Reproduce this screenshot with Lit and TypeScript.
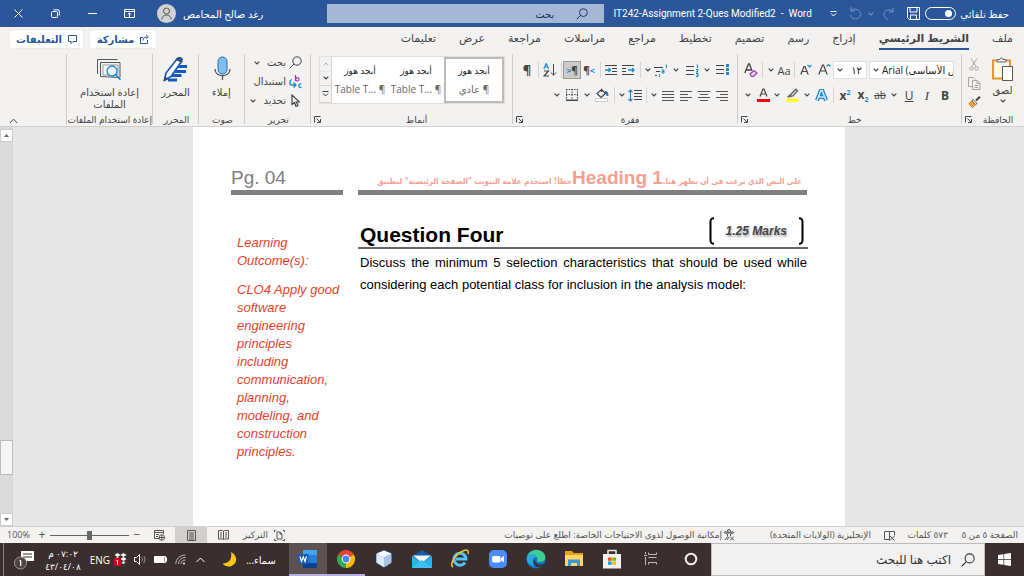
import { LitElement, html, css, svg, nothing } from "lit";
import { customElement, state } from "lit/decorators.js";

const chev = html`<svg class="chev" width="6" height="4" viewBox="0 0 6 4"><path d="M.7.6 3 3 5.3.6" fill="none" stroke="currentColor" stroke-width="1.2"/></svg>`;
const chevBtn = (label: string) => html`<button class="ic" aria-label=${label}>${chev}</button>`;
const sep = html`<i class="sep"></i>`;
const ic = (w: number, h: number, body: unknown) =>
  html`<svg width=${w} height=${h} viewBox="0 0 ${w} ${h}" fill="none" stroke="currentColor" aria-hidden="true">${body}</svg>`;
const tool = (label: string, body: unknown, cls = "") =>
  html`<button class="ic ${cls}" aria-label=${label}>${body}</button>`;

const launcher = html`<button class="launch" aria-label="المزيد">${ic(7, 7, svg`<path d="M.5 6.500V.5H6.500M2.500 2.500 6 6M6.500 3v3.500H3"/>`)}</button>`;
const lines = (rows: number[][], w = 13) =>
  ic(w, 11, rows.map(([a, b], i) => svg`<path d="M${a} ${1.5 + i * 3}H${b}" stroke="#555"/>`));

const tabs = ["ملف", "الشريط الرئيسي", "إدراج", "رسم", "تصميم", "تخطيط", "مراجع", "مراسلات", "مراجعة", "عرض", "تعليمات"];

const bullets = ic(13, 12, svg`<path d="M0 1.500H8M0 5.500H8M0 9.500H8"/><path d="M10 0h3v3h-3zM10 4h3v3h-3zM10 8h3v3h-3z" fill="#1e88d2" stroke="none"/>`);
const numbering = ic(13, 13, svg`<path d="M0 2.500H8M0 6.500H8M0 10.500H8"/><path d="M10.500 1h1v3M10 5.500h2v1.200l-2 1.300h2.200M10 9.500h2v3h-2M10.500 11h1.500" stroke="#1e88d2"/>`);
const multilevel = ic(14, 13, svg`<path d="M0 3.500H9M2 7.500H6M1 11.500H3"/><path d="M11.500 1h1v3M7.500 6h2.500v3H8V7.500h2M5.500 10v3" stroke="#1e88d2"/>`);
const indent = ic(13, 11, svg`<path d="M0 .5H12M7 3.500H12M7 6.500H12M0 9.500H12"/><path d="M0 5H5.500M3.500 3l2 2-2 2" stroke="#1e88d2" stroke-width="1.300"/>`);
const outdent = ic(13, 11, svg`<path d="M0 .5H12M0 3.500H4M0 6.500H4M0 9.500H12"/><path d="M6 5h6M10 3l2 2-2 2" stroke="#1e88d2" stroke-width="1.300"/>`);
const spacing = ic(14, 13, svg`<path d="M6 1.500H14M6 4.500H14M6 7.500H14M6 10.500H14"/><path d="M2.500 1v11M.5 3l2-2 2 2M.5 10l2 2 2-2" stroke="#1e88d2" stroke-width="1.200"/>`);
const fill = ic(14, 14, svg`<path d="M6.500 1.500 10.500 5.500 6 9.500 2 5.500 6.500 1.500V4" stroke-width="1.200"/><path d="M10 4c2 0 2.500 2 2.500 4" stroke="#1e6fb8" stroke-width="2"/><path d="M.5 10.500h12v3H.5z" fill="#fff" stroke="#ccc"/>`);
const borders = ic(12, 12, svg`<path d="M.5 0v11M11.500 0v11M6 0v11M0 .5H12M0 5.500H12" stroke-dasharray="1.500 1.200"/><path d="M0 11.300H12" stroke-width="1.400"/>`);
const sortIcon = ic(14, 14, svg`<path d="M.8 6 3.200.5 5.600 6M1.800 4h3" stroke="#1e88d2" stroke-width="1.200"/><path d="M1 8h4.500L1 13h5" stroke-width="1.200"/><path d="M10.500 1v11M7.800 9.500l2.700 2.700 2.700-2.700"/>`);
const eraser = ic(14, 14, svg`<path d="M.8 10 4.500 1h1L8 8M2.300 7h4.500" stroke-width="1.300"/><path d="m6 11 4-3.500 3 2.500-3.500 3.500h-2z" fill="#ecd5f3" stroke="#a33bb5" stroke-width="1.300"/>`);
const marker = ic(13, 14, svg`<path d="M5 6 10 1.200l1.500 1.500L7 8 4 8.500z" fill="#ddd" stroke="#666" stroke-width="1.300"/><path d="M1.500 9 4 6.500 5.500 8.500z" fill="#666" stroke="#666"/><path d="M.5 10.800h12v3H.5z" fill="#ff0" stroke="none"/>`);
const fontColor = ic(13, 14, svg`<path d="M3 8.500 6 1h1l3 7.500M4 6h5" stroke-width="1.200"/><path d="M0 11h13v3H0z" fill="#f00" stroke="none"/>`);
const effects = ic(13, 13, svg`<path d="M2 11.500 5.800 1.500h1.400l3.800 10M4 8h5" stroke="#1f7fd0" stroke-width="4"/><path d="M2 11.500 5.800 1.500h1.400l3.800 10M4 8h5" stroke="#cfe8fa" stroke-width="1.600"/>`);
const grow = ic(13, 14, svg`<path d="M.8 11.500 4.500 2h1l3.700 9.500M2 8h6" stroke-width="1.200"/><path d="m8.500 3.500 2-2 2 2" stroke="#1e88d2" stroke-width="1.200"/>`);
const shrink = ic(12, 13, svg`<path d="M.8 10.500 4 2.500h1l3.200 8M2 7.500h5" stroke-width="1.200"/><path d="m7.500 1 2 2 2-2" stroke="#1e88d2" stroke-width="1.200"/>`);
const paste = ic(23, 25, svg`<path d="M2 3.500h17v18H2z" fill="#fdf6ec" stroke="#e8962e" stroke-width="2"/><path d="M6 5V2.500h3a1.500 1.500 0 0 1 3 0h3V5z" fill="#eee" stroke="#666"/><path d="M11.500 9.500h10v14h-10z" fill="#fff" stroke="#555"/>`);
const cut = ic(10, 13, svg`<path d="m2 .5 5 8M8 .5l-5 8" stroke="#a6a6a6"/><circle cx="2.500" cy="10.500" r="1.700" stroke="#a6a6a6"/><circle cx="7.500" cy="10.500" r="1.700" stroke="#a6a6a6"/>`);
const copy = ic(13, 13, svg`<path d="M4.500 9.500h-4v-9h5l2 2M4.500 3.500H9l3 3v6H4.500zM9 3.500v3h3M6.500 8.500h3.500M6.500 10.500h3.500" stroke="#a6a6a6"/>`);
const brush = ic(13, 12, svg`<path d="M12 .8 8 4.500" stroke="#444" stroke-width="2"/><path d="M5 3.500 9 7.500l-1.500 1L4 5z" fill="#fff" stroke="#555"/><path d="M3.500 5 .8 8l3.700 3.500 2.800-2.700z" fill="#f5a445" stroke="#e07b10"/>`);
const loupe = (s: number, c = "currentColor") => html`<svg width=${s} height=${s} viewBox="0 0 13 13" fill="none" stroke=${c} aria-hidden="true"><circle cx="8" cy="5" r="4.200"/><path d="M5 8 .7 12.300"/></svg>`;
const replaceIcon = ic(13, 14, svg`<path d="M6.500 0v6" stroke="#a33bb5" stroke-width="1.300"/><circle cx="8.300" cy="4.300" r="1.700" stroke="#a33bb5" stroke-width="1.200"/><path d="M12.500 9c-3-1.200-4 3.800 0 3.500M2.800 4.500c-3 1.500-2.500 5.500.5 5.500h3M4.500 7.500 7 10l-2.500 2.500" stroke="#1e88d2" stroke-width="1.300"/>`);
const cursor = ic(9, 13, svg`<path d="M1 1v9.500l2.500-2 1.500 4 2-1-1.700-3.500H8.500z" stroke-width="1.200"/>`);
const mic = ic(18, 27, svg`<rect x="5" y="1" width="9" height="17" rx="4.500" fill="#83bdec" stroke="#1e6fb8"/><path d="M2 13c0 9 15 9 15 0M9.500 20v4" stroke="#555" stroke-width="1.300"/>`);
const editorPen = ic(25, 25, svg`<path d="M15 9.500h9M12 14.500h11M9 18.500h9.500M5 23h9" stroke="#1559c0" stroke-width="3.200"/><path d="M14 2 18.500 4.500 8 19.500 1.500 23 3 16z" fill="#fff" stroke="#1559c0" stroke-width="1.700"/><path d="m13 2.500 2-2h3l1.500 1.500-1 3zM1 24l1-4 2.500 2z" fill="#1559c0"/>`);
const reuse = ic(26, 24, svg`<path d="M.5 17V2.500h20M3.500 19.500V5.500H23v15z" stroke="#555"/><path d="M6 8h15v10H6z" fill="#fff" stroke="#999"/><circle cx="15" cy="14" r="5" fill="#e8f4fc" stroke="#1e88d2" stroke-width="1.300"/><path d="m18.500 17.500 5 5.500" stroke="#1e88d2" stroke-width="1.500"/>`);

const wordIcon = ic(20, 20, svg`<path d="M5 1h14v18H5z" fill="#2b7cd3" stroke="none"/><path d="M5 1h14v5H5z" fill="#41a5ee" stroke="none"/><path d="M5 14h14v5H5z" fill="#103f91" stroke="none"/><path d="M0 5h10.500v10H0z" fill="#185abd" stroke="none"/><path d="m2 7.500 1.500 5L5.300 8l1.700 4.500L8.500 7.500" stroke="#fff" stroke-width="1.200"/>`);
const chrome = ic(20, 20, svg`<g stroke="none"><path d="M10 10 2.200 5.500a9 9 0 0 1 15.600 0z" fill="#ea4335"/><path d="m10 10 7.800-4.500A9 9 0 0 1 10 19z" fill="#fbbc05"/><path d="M10 10v9A9 9 0 0 1 2.200 5.500z" fill="#34a853"/><circle cx="10" cy="10" r="4.400" fill="#fff"/><circle cx="10" cy="10" r="3.400" fill="#4285f4"/></g>`);
const vbox = ic(18, 20, svg`<path d="m9 1 8 3.500V14l-8 5-8-5V4.500z" fill="#aac4e4" stroke="#22365e"/><path d="m1.500 5 7.500 3v10l-7.500-4.500z" fill="#dce9f7" stroke="none"/><path d="m9 1.500 7.500 3L9 8 1.500 4.500z" fill="#f5f9fd" stroke="none"/>`);
const mail = ic(20, 18, svg`<g stroke="none"><path d="m0 6 10-6 10 6v12H0z" fill="#0f5ea8"/><path d="M1 5.500h18L10 13z" fill="#f4f4f4"/><path d="m0 6 10 7 10-7v12H0z" fill="#2bb3ee"/><path d="m0 18 10-8 10 8z" fill="#3cc0f5"/></g>`);
const ie = ic(20, 20, svg`<path d="M15 13.500A6 6 0 1 1 16 10H6" stroke="#4fc3f7" stroke-width="3"/><path d="M3 18C-1 16 5 6 11 3c6-3.500 8-2 7 2" stroke="#f4c430" stroke-width="1.500"/>`);
const zoomApp = ic(20, 20, svg`<g stroke="none"><rect x="1" y="1" width="18" height="18" rx="5" fill="#4a8cff"/><rect x="4" y="7" width="8.500" height="6.500" rx="1.500" fill="#fff"/><path d="m13 9 3-2v6.500l-3-2z" fill="#fff"/></g>`);
const edge = ic(20, 20, svg`<g stroke="none"><circle cx="10" cy="10" r="9.500" fill="#1373c8"/><path d="M1 8C3 0 15-2 19 6c1.500 5-2 7-6 7-3 0-1.500-1.500-1.500-3C11.500 6 4 5 1 8z" fill="#3ccf8e"/><path d="M1 8c2-4 10-4 10.500 1-4-2-7 3-3 8-5 0-9-5-7.500-9z" fill="#29a9e0"/><path d="M9 10c-1 4 4 7 9 5l1 0c-3 3-6 4-9 2.500C7 15 7 12 9 10z" fill="#3a2f2e"/></g>`);
const folder = ic(18, 15, svg`<g stroke="none"><path d="M0 0h7l1.500 2H18v13H0z" fill="#e8a317"/><path d="M0 4h18v11H0z" fill="#ffd566"/><path d="M3 15V8.500h12V15h-3v-3H6v3z" fill="#3b97dd"/></g>`);
const store = ic(20, 20, svg`<path d="M6 6V1.500h8V6" stroke="#e8e8e8" stroke-width="1.500"/><path d="M1 5h18v14.500H1z" fill="#f2f2f2" stroke="none"/><g stroke="none"><path d="M6 8.500h3.700v3.300H6z" fill="#f25022"/><path d="M10.300 8.500H14v3.300h-3.700z" fill="#7fba00"/><path d="M6 12.500h3.700v3.300H6z" fill="#00a4ef"/><path d="M10.300 12.500H14v3.300h-3.700z" fill="#ffb900"/></g>`);
const taskView = ic(14, 13, svg`<path d="M1.500 0v2M1.500 5v8M0 3.500h3M4.500.5v2h8v-2M4.500 12.500v-2h8v2M4.500 5.500h8" stroke="#bbb"/>`);
const cortana = ic(14, 14, svg`<circle cx="7" cy="7" r="5.300" stroke="#eee" stroke-width="2"/>`);

const apps: [string, unknown, string][] = [
  ["Cortana", cortana, "wide"],
  ["عرض المهام", taskView, "wide"],
  ["Store", store, ""],
  ["مستكشف الملفات", folder, ""],
  ["Edge", edge, ""],
  ["Zoom", zoomApp, ""],
  ["Internet Explorer", ie, ""],
  ["البريد", mail, ""],
  ["VirtualBox", vbox, ""],
  ["Chrome", chrome, "open"],
  ["Word", wordIcon, "open active"],
];

@customElement("app-root")
export class AppRoot extends LitElement {
  @state() private tab = 1;

  static styles = css`
    :host { display: flex; flex-direction: column; height: 100vh; overflow: hidden; direction: rtl; color: #444; background: #e6e6e6;
      font: 11px/14px "Open Sans", "DejaVu Sans", sans-serif; }
    * { box-sizing: border-box; }
    button, input, select { font: inherit; color: inherit; background: none; border: 0; padding: 0; margin: 0; }
    button { white-space: nowrap; }
    svg { display: block; flex: none; }
    .ltr { direction: ltr; }

    .title { display: flex; align-items: center; height: 27px; flex: none; background: #2b579a; color: #fff; padding-right: 15px; font-size: 10px; }
    .title .cell { display: flex; align-items: center; justify-content: center; flex: none; }
    .autosave { display: flex; align-items: center; gap: 5px; width: 84px; flex: none; white-space: nowrap; }
    .autosave .cap { width: 48px; }
    .autosave input { appearance: none; width: 31px; height: 13px; border: 1px solid #fff; border-radius: 7px; display: flex; align-items: center; padding: 0 3px; }
    .autosave input::before { content: ""; width: 7px; height: 7px; border-radius: 50%; background: #fff; }
    .w24 { width: 24px; } .w20 { width: 20px; } .w12 { width: 12px; }
    .dim { opacity: .35; }
    .docname { flex: 1; min-width: 0; text-align: center; white-space: pre; direction: ltr; font-family: "Roboto", "DejaVu Sans", sans-serif; font-size: 10px; }
    .find { display: flex; align-items: center; gap: 22px; width: 277px; flex: none; height: 19px; background: #a4b8d5; color: #17315e; padding: 0 16px 0 8px; }
    .find input { flex: 1; min-width: 0; outline: 0; }
    .find input::placeholder, .tsearch input::placeholder { color: inherit; opacity: 1; }
    .user { display: flex; flex: none; align-items: center; gap: 7px; margin-right: 64px; white-space: nowrap; }
    .avatar { width: 19px; height: 19px; border-radius: 50%; background: #d4d2d1; color: #555; display: grid; place-items: center; }
    .win { display: flex; flex: none; margin-right: 9px; }
    .win button { width: 37px; height: 27px; display: grid; place-items: center; }

    .tabs { display: flex; align-items: center; height: 24px; flex: none; background: #f3f2f1; padding: 0 11px 0 10px; }
    .tab { height: 23px; margin-left: 23px; padding-bottom: 1px; border-bottom: 2px solid transparent; }
    .tab.on { font-weight: 700; border-color: #2b579a; height: 21px; padding: 0; }
    .push { flex: 1; }
    .pill { display: flex; flex: none; align-items: center; justify-content: center; gap: 6px; height: 18px; width: 66px; background: #fff; border-radius: 2px; box-shadow: 0 0 1px #bbb; color: #2b579a; font-weight: 700; font-size: 10px; margin-right: 7px; }
    .pill.comments { width: 73px; }

    .ribbon { display: flex; height: 76px; flex: none; background: #f3f2f1; border-bottom: 1px solid #d2d0ce; padding: 3px 0 0; font-size: 9px; line-height: 11px; overflow: hidden; }
    .group { display: flex; flex-direction: column; flex: none; border-left: 1px solid #cfcdcb; height: 70px; }
    .body { height: 60px; flex: none; }
    .foot { display: flex; align-items: center; height: 12px; padding-left: 2px; }
    .foot span { flex: 1; text-align: center; white-space: nowrap; }
    .launch { width: 8px; height: 8px; }
    .g-clip { width: 63px; } .g-font { width: 224px; } .g-par { width: 225px; } .g-sty { width: 202px; } .g-edit { width: 66px; } .g-one { width: 46px; } .g-reuse { width: 86px; }
    .clip { display: grid; grid-template-columns: 39px 18px; padding-right: 2px; }
    .pastebtn { display: flex; flex-direction: column; align-items: center; gap: 3px; font-size: 10px; padding-top: 3px; }
    .stack { display: flex; flex-direction: column; align-items: center; gap: 6px; padding-top: 4px; }
    .tools { display: flex; flex-direction: column; gap: 7px; padding: 7px 7px 0 0; }
    .tools.p { padding-right: 6px; }
    .row { display: grid; height: 18px; align-items: center; justify-items: center; }
    .f1 { grid-template-columns: 85px 2px 34px 18px 18px 6px 14px 12px 6px 16px; }
    .f2 { grid-template-columns: 18px 18px 18px 12px 16px 18px 18px 6px 18px 10px 20px 10px 18px 12px; }
    .p1 { grid-template-columns: 18px 12px 18px 14px 16px 10px 6px 18px 16px 6px 16px 18px 4px 18px 6px 16px; }
    .p2 { grid-template-columns: 18px 18px 18px 18px 10px 6px 16px 10px 6px 18px 12px 18px 12px; }
    .ic { display: grid; place-items: center; width: 100%; height: 18px; font-size: 12px; direction: ltr; }
    .on-box { background: #cdcbc9; border: 1px solid #999; }
    .b { font-weight: 700; } .it { font-style: italic; font-family: "Liberation Serif", serif; font-size: 13px; } .u { text-decoration: underline; } .s { text-decoration: line-through; font-size: 10px; }
    .x { font-weight: 700; } .x sub, .x sup { font-size: 7px; line-height: 0; color: #1e88d2; }
    .blue { color: #1e88d2; font-size: 9px; font-weight: 700; }
    .sm { font-size: 11px; } .pm-mark { font-size: 10px; font-weight: 700; } .para { font-size: 13px; font-weight: 700; }
    .sep { width: 1px; height: 16px; background: #d6d4d2; }
    .combo { display: flex; direction: ltr; align-items: center; gap: 3px; width: 100%; height: 18px; background: #fff; border: 1px solid #e1dfdd; padding: 0 0 0 3px; overflow: hidden; font-size: 10px; }
    .combo select { appearance: none; flex: 1; min-width: 0; overflow: hidden; color: #222; }
    .combo.size select { direction: rtl; padding-right: 4px; }

    .gallery { display: flex; margin: 2px 7px 0 8px; height: 48px; background: #fff; border: 1px solid #e1dfdd; }
    .style { flex: 1; min-width: 0; display: flex; flex-direction: column; justify-content: center; align-items: center; gap: 8px; overflow: hidden; }
    .style.sel { border: 2px solid #bdbbb9; }
    .style b { font-weight: 400; color: #222; font-size: 9px; }
    .style span { font-size: 10px; color: #666; }
    .arrows { width: 12px; display: grid; border-right: 1px solid #d6d4d2; background: #f3f2f1; }
    .arrows button { display: grid; place-items: center; border-bottom: 1px solid #d6d4d2; }
    .edit { display: flex; flex-direction: column; gap: 2px; padding: 0 8px 0 0; }
    .edit button { display: flex; align-items: center; gap: 3px; height: 17px; font-size: 10px; }
    .edit .chev { margin-right: 4px; }
    .edit .g { width: 13px; display: grid; place-items: center; }
    .big { display: flex; flex-direction: column; align-items: center; gap: 3px; width: 100%; padding-top: 1px; font-size: 10px; line-height: 12px; }
    .gi { height: 28px; display: grid; place-items: center; }
    .collapse { margin: auto auto 0 9px; height: 10px; }

    .work { display: flex; direction: ltr; flex: 1; min-height: 0; }
    .bar { width: 13px; flex: none; background: #dadada; display: flex; flex-direction: column; padding-top: 2px; }
    .bar button { height: 13px; background: #fff; border: 1px solid #ccc; display: grid; place-items: center; }
    .track { flex: 1; display: grid; grid-template-rows: 299fr 35px 38fr; }
    .track i { grid-row: 2; background: #f5f5f5; border: 1px solid #bbb; }
    .canvas { flex: 1; display: flex; justify-content: center; overflow: hidden; }
    .page { width: 652px; background: #fff; color: #000; padding: 39px 37px 0 38px; font-family: "Liberation Sans", "DejaVu Sans", sans-serif; margin-left: 1px; }
    .cols { display: grid; grid-template-columns: 112px 450px; column-gap: 15px; }
    .hd { border-bottom: 5px solid #808080; height: 29px; font-size: 19px; line-height: 24px; color: #808080; }
    .hd.r { display: flex; justify-content: flex-end; align-items: baseline; padding-right: 5px; white-space: nowrap; color: #f4a090; font-weight: 700; margin-right: 1px; }
    .hd.r small { direction: rtl; font: 700 8px/12px "DejaVu Sans Condensed", "DejaVu Sans", sans-serif; }
    .los { padding: 39px 0 0 6px; color: #e8412a; font: italic 13px/18px "Liberation Sans", sans-serif; }
    .los p { margin: 0 0 11px; }
    .main { padding-top: 19px; }
    .qh { display: flex; justify-content: space-between; align-items: flex-end; border-bottom: 2px solid #666; height: 35px; padding: 0 4px 0 2px; }
    h1 { margin: 0; font-size: 21px; line-height: 24px; }
    .marks { display: flex; align-items: center; gap: 11px; height: 28px; align-self: flex-start; font: italic 700 12px/16px "Liberation Sans", sans-serif; color: #444; text-shadow: 1px 2px 2px #aaa; margin-top: 3px; }
    .txt { margin: 3px 1px 0 2px; font-size: 13px; line-height: 22px; text-align: justify; }

    .status { display: flex; align-items: center; height: 17px; flex: none; background: #f3f2f1; border-top: 1px solid #d2d0ce; padding: 0 6px 0 6px; font-size: 9px; color: #555; white-space: nowrap; }
    .status > * { flex: none; }
    .status .push { flex: 1; }
    .st1 { width: 70px; text-align: right; } .st2 { width: 53px; text-align: right; } .st3 { width: 12px; } .st4 { width: 148px; padding-right: 12px; text-align: right; }
    .acc { padding-right: 1px; }
    .view { display: grid; place-items: center; width: 32px; height: 17px; } .view.on { background: #d2d0ce; }
    .focus { display: flex; align-items: center; gap: 6px; width: 46px; }
    .status input { appearance: none; width: 79px; height: 13px; background: linear-gradient(#666, #666) center / 100% 1px no-repeat; margin: 0 2px; }
    .status input::-webkit-slider-thumb { appearance: none; width: 5px; height: 9px; background: #666; }
    .pm { width: 12px; font-size: 12px; line-height: 14px; }
    .pct { width: 30px; text-align: left; padding-left: 1px; }

    .task { display: flex; height: 33px; flex: none; background: #3a2f2e; color: #fff; }
    .start { width: 39px; display: grid; place-items: center; }
    .tsearch { flex: 0 1 274px; display: flex; align-items: center; gap: 10px; background: #f1f1f1; border: 1px solid #bbb; padding: 0 9px; color: #333; font-size: 12px; }
    .tsearch input { flex: 1; min-width: 0; outline: 0; }
    .app { width: 38px; display: grid; place-items: center; border-bottom: 2px solid transparent; }
    .app.wide { width: 40px; } .app.open { border-color: #b9b0e6; } .app.active { background: #5c5250; }
    .weather { display: flex; align-items: center; gap: 9px; font-size: 10px; margin-right: 13px; }
    .tray { display: flex; align-items: center; font-size: 10px; }
    .tray button { width: 20px; display: grid; place-items: center; }
    .tray .eng { width: 24px; }
    .tray .clock { width: 46px; line-height: 13px; font-size: 9px; display: block; text-align: center; }
    .tray .note { width: 32px; }
    .desk { width: 5px; margin-left: 3px; border-left: 1px solid #8a8280; }
  `;

  private titleBar() {
    return html`<header class="title">
      <label class="autosave"><span class="cap">حفظ تلقائي</span><input type="checkbox" /></label>
      <button class="cell w24" aria-label="حفظ">${ic(13, 13, svg`<path d="M.5.5h12v12h-10l-2-2zM3 .5v4.500h7V.5M3.500 12.500V8h6v4.500"/>`)}</button>
      <button class="cell w24 dim" aria-label="إعادة">${ic(12, 12, svg`<path d="M10 0v4H6M10 4C7 0 1 2 1 6c0 3 2 4 4 5.500"/>`)}</button>
      <span class="cell w12 dim">${chev}</span>
      <button class="cell w20 dim" aria-label="تراجع">${ic(13, 13, svg`<path d="M2 0v4h4M2 4c3-4 10-1 9.500 3.500C11 13 3 13.500 1 8"/>`)}</button>
      <button class="cell w24" aria-label="تخصيص">${ic(7, 6, svg`<path d="M.5.5h6M1 2.500l2.500 2.500L6 2.500"/>`)}</button>
      <div class="docname">IT242-Assignment 2-Ques Modified2  -  Word</div>
      <label class="find">${loupe(12)}<input placeholder="بحث" aria-label="بحث" /></label>
      <div class="user"><span>رغد صالح المحامص</span><span class="avatar">${ic(11, 13, svg`<circle cx="5.500" cy="4" r="3"/><path d="M.8 12.500c0-6 9.400-6 9.400 0"/>`)}</span></div>
      <div class="win">
        <button aria-label="خيارات الشريط">${ic(11, 9, svg`<path d="M.5.5h10v8H.5zM.5 2.500h10M5.500 8V4M3.800 5.500 5.500 4l1.700 1.500"/>`)}</button>
        <button aria-label="تصغير">${ic(9, 3, svg`<path d="M0 1.500h9"/>`)}</button>
        <button aria-label="استعادة">${ic(9, 9, svg`<rect x=".5" y="2.500" width="6" height="6" rx="1"/><path d="M2.500.8H7a1.300 1.300 0 0 1 1.300 1.300V6.500"/>`)}</button>
        <button aria-label="إغلاق">${ic(9, 9, svg`<path d="m.5.5 8 8M8.500.5l-8 8"/>`)}</button>
      </div>
    </header>`;
  }

  private tabRow() {
    return html`<nav class="tabs" role="tablist">
      ${tabs.map((t, i) => html`<button class="tab ${i === this.tab ? "on" : ""}" role="tab" aria-selected=${i === this.tab} @click=${() => (this.tab = i)}>${t}</button>`)}
      <span class="push"></span>
      <button class="pill">${ic(9, 10, svg`<path d="M3 3.500H.5v6h7V6M3 6.500c0-2 1-3.500 4-3.500M6 .8 8.300 3 6 5.200"/>`)}<span>مشاركة</span></button>
      <button class="pill comments">${ic(9, 9, svg`<path d="M.5.5h8v6H5l-2 2v-2H.5z"/>`)}<span>التعليقات</span></button>
    </nav>`;
  }

  private ribbon() {
    const foot = (t: string, l: boolean) => html`<div class="foot"><span>${t}</span>${l ? launcher : nothing}</div>`;
    return html`<section class="ribbon">
      <div class="group g-clip"><div class="body clip">
        <button class="pastebtn">${paste}<span>لصق</span>${chev}</button>
        <div class="stack">${cut}${copy}${brush}</div>
      </div>${foot("الحافظة", true)}</div>

      <div class="group g-font"><div class="body tools">
        <div class="row f1">
          <span class="combo">${chev}<select aria-label="الخط"><option>Arial (نص الأساسى</option></select></span><i></i>
          <span class="combo size">${chev}<select aria-label="حجم الخط"><option>١٢</option></select></span>
          ${tool("تكبير الخط", grow)}${tool("تصغير الخط", shrink)}${sep}
          ${tool("حالة الأحرف", "Aa", "sm")}${chevBtn("حالة الأحرف")}${sep}${tool("مسح التنسيق", eraser)}
        </div>
        <div class="row f2">
          ${tool("غامق", "B", "b")}${tool("مائل", "I", "it")}${tool("تسطير", "U", "u")}${chevBtn("تسطير")}${tool("يتوسطه خط", "ab", "s")}
          ${tool("منخفض", html`<span>x<sub>2</sub></span>`, "x")}${tool("مرتفع", html`<span>x<sup>2</sup></span>`, "x")}${sep}
          ${tool("تأثيرات", effects)}${chevBtn("تأثيرات")}${tool("تمييز", marker)}${chevBtn("تمييز")}${tool("لون الخط", fontColor)}${chevBtn("لون الخط")}
        </div>
      </div>${foot("خط", true)}</div>

      <div class="group g-par"><div class="body tools p">
        <div class="row p1">
          ${tool("تعداد نقطي", bullets)}${chevBtn("تعداد نقطي")}${tool("تعداد رقمي", numbering)}${chevBtn("تعداد رقمي")}${tool("متعدد المستويات", multilevel)}${chevBtn("متعدد المستويات")}${sep}
          ${tool("إنقاص المسافة", outdent)}${tool("زيادة المسافة", indent)}${sep}
          ${tool("من اليمين لليسار", html`<span>¶<span class="blue">&lt;</span></span>`, "pm-mark")}
          ${tool("من اليسار لليمين", html`<span><span class="blue">&gt;</span>¶</span>`, "pm-mark on-box")}${sep}
          ${tool("فرز", sortIcon)}${sep}${tool("إظهار الكل", "¶", "para")}
        </div>
        <div class="row p2">
          ${tool("محاذاة لليمين", lines([[0, 12], [4, 12], [0, 12], [4, 12]]))}${tool("توسيط", lines([[0, 12], [2, 10], [0, 12], [2, 10]]))}
          ${tool("محاذاة لليسار", lines([[0, 12], [0, 8], [0, 12], [0, 8]]))}${tool("ضبط", lines([[0, 12], [0, 12], [0, 12], [0, 12]]))}
          ${chevBtn("ضبط")}${sep}${tool("تباعد الأسطر", spacing)}${chevBtn("تباعد الأسطر")}${sep}
          ${tool("تظليل", fill)}${chevBtn("تظليل")}${tool("حدود", borders)}${chevBtn("حدود")}
        </div>
      </div>${foot("فقرة", true)}</div>

      <div class="group g-sty"><div class="body"><div class="gallery">
        ${["¶ عادي", "Table T... ¶", "Table T... ¶"].map((n, i) => html`<button class="style ${i ? "" : "sel"}"><b>أبجد هوز</b><span class=${i ? "ltr" : ""}>${n}</span></button>`)}
        <div class="arrows">
          <button aria-label="أعلى" class="dim">${ic(6, 4, svg`<path d="M.7 3.400 3 1l2.300 2.400"/>`)}</button>
          <button aria-label="أسفل">${chev}</button>
          <button aria-label="المزيد">${ic(7, 6, svg`<path d="M.5.5h6M1 2.500l2.500 2.500L6 2.500"/>`)}</button>
        </div>
      </div></div>${foot("أنماط", true)}</div>

      <div class="group g-edit"><div class="body edit">
        <button><span class="g">${loupe(13)}</span><span>بحث</span>${chev}</button>
        <button><span class="g">${replaceIcon}</span><span>استبدال</span></button>
        <button><span class="g">${cursor}</span><span>تحديد</span>${chev}</button>
      </div>${foot("تحرير", false)}</div>
      <div class="group g-one"><div class="body"><button class="big"><span class="gi">${mic}</span>إملاء</button></div>${foot("صوت", false)}</div>
      <div class="group g-one"><div class="body"><button class="big"><span class="gi">${editorPen}</span>المحرر</button></div>${foot("المحرر", false)}</div>
      <div class="group g-reuse"><div class="body"><button class="big"><span class="gi">${reuse}</span><span>إعادة استخدام<br />الملفات</span></button></div>${foot("إعادة استخدام الملفات", false)}</div>
      <button class="collapse" aria-label="طي الشريط">${ic(9, 6, svg`<path d="m.7 5 3.800-3.800L8.300 5"/>`)}</button>
    </section>`;
  }

  private document() {
    return html`<main class="work">
      <div class="bar">
        <button aria-label="أعلى">${ic(5, 3, svg`<path d="m0 3 2.500-3L5 3z" fill="#666" stroke="none"/>`)}</button>
        <div class="track"><i></i></div>
        <button aria-label="أسفل">${ic(5, 3, svg`<path d="m0 0 2.500 3L5 0z" fill="#666" stroke="none"/>`)}</button>
      </div>
      <div class="canvas"><article class="page"><div class="cols">
        <div class="hd">Pg. 04</div>
        <div class="hd r"><small>خطأ! استخدم علامة التبويب "الصفحة الرئيسية" لتطبيق</small><span>Heading 1</span><small>على النص الذي ترغب في أن يظهر هنا.</small></div>
        <div class="los"><p>Learning Outcome(s):</p><p>CLO4 Apply good software engineering principles including communication, planning, modeling, and construction principles.</p></div>
        <div class="main">
          <div class="qh"><h1>Question Four</h1>
            <div class="marks">
              ${ic(6, 28, svg`<path d="M5 1.200C1.500 1.200 1.500 3 1.500 5v18c0 2 0 3.800 3.500 3.800" stroke="#000" stroke-width="2"/>`)}
              <span>1.25 Marks</span>
              ${ic(6, 28, svg`<path d="M1 1.200C4.500 1.200 4.500 3 4.500 5v18c0 2 0 3.800-3.500 3.800" stroke="#000" stroke-width="2"/>`)}
            </div>
          </div>
          <p class="txt">Discuss the minimum 5 selection characteristics that should be used while considering each potential class for inclusion in the analysis model:</p>
        </div>
      </div></article></div>
    </main>`;
  }

  private statusBar() {
    return html`<footer class="status">
      <span class="st1">الصفحة ٥ من ٥</span><span class="st2">٥٧٣ كلمات</span>
      <span class="st3">${ic(11, 11, svg`<path d="M5.500 1.500v9M.5 9.500v-8h5M5.500 1.500h5v4M.5 9.500h5M6 6l4.500 4.500M10.500 6 6 10.500"/>`)}</span>
      <span class="st4">الإنجليزية (الولايات المتحدة)</span>
      ${ic(12, 12, svg`<circle cx="6" cy="2" r="1.500"/><path d="M1 3.500 4.500 5v2.500L2 11M11 3.500 7.500 5v2M1 3.500l1-1L5 4h2l3-1.500 1 1M4 11l2-3M7 7.500l4 4M11 7.500l-4 4"/>`)}
      <span class="acc">إمكانية الوصول لذوي الاحتياجات الخاصة: اطلع على توصيات</span>
      <span class="push"></span>
      <button class="focus">${ic(11, 11, svg`<path d="M2.500 0H.5v2M.5 9v1.500h2M8.500 10.500h2V9M10.500 2V.5H9M3 2h3l2 2v5H3zM6 2v2h2"/>`)}<span>التركيز</span></button>
      <button class="view" aria-label="وضع القراءة">${ic(11, 10, svg`<path d="M5.500 1v8.500M.5.5h4l1 .7 1-.7h4v8.500h-4l-1 .7-1-.7h-4zM2 3h2M2 5h2M2 7h2M7 3h2M7 5h2M7 7h2"/>`)}</button>
      <button class="view on" aria-label="تخطيط الطباعة">${ic(9, 11, svg`<path d="M.5.5h8v10h-8zM2 3h5M2 5h5M2 7h5M2 9h5"/>`)}</button>
      <button class="view" aria-label="تخطيط ويب">${ic(11, 11, svg`<path d="M5 8.500H.5v-8h9V4M.5 2.500h9M2 4.500h3M2 6.500h2"/><circle cx="7.800" cy="7.500" r="2.800"/><path d="M5 7.500h5.500M7.800 5v5"/>`)}</button>
      <button class="pm" aria-label="تصغير">−</button>
      <input type="range" min="10" max="190" value="100" aria-label="التكبير" />
      <button class="pm" aria-label="تكبير">+</button>
      <span class="pct ltr">100%</span>
    </footer>`;
  }

  private taskbar() {
    return html`<footer class="task">
      <button class="start" aria-label="ابدأ">${ic(13, 13, svg`<path d="m0 2 5.500-.8V6H0zM6.200 1 13 0v6H6.200zM0 6.700h5.500v5L0 11zM6.200 6.700H13V13l-6.800-1z" fill="#fff" stroke="none"/>`)}</button>
      <label class="tsearch">${loupe(14)}<input placeholder="اكتب هنا للبحث" aria-label="اكتب هنا للبحث" /></label>
      ${apps.map(([n, i, c]) => html`<button class="app ${c}" aria-label=${n}>${i}</button>`)}
      <button class="weather"><span>سماء...</span>${ic(15, 15, svg`<path d="M9 0c6 3 7 10 2 13-3 2.500-8 2-10.500-1.500C8 11 10 7 9 0z" fill="#f9c613" stroke="none"/>`)}</button>
      <span class="push"></span>
      <div class="tray">
        <button aria-label="المزيد">${ic(9, 6, svg`<path d="m.5 5 4-4 4 4"/>`)}</button>
        <button aria-label="الشبكة">${ic(11, 11, svg`<g stroke="#bbb"><path d="M.8 10C.8 5 5 1 10.500 1M3.500 10c0-3.500 3-6.500 7-6.500M6 10c0-2.500 2-4 4.500-4"/></g><circle cx="9" cy="9.500" r="1" fill="#fff" stroke="none"/>`)}</button>
        <button aria-label="البطارية">${ic(13, 7, svg`<path d="M.5.5h11v6H.5z"/><path d="M1 1h9v5H1zM12 2h1v3h-1z" fill="#fff"/>`)}</button>
        <button aria-label="الصوت">${ic(12, 11, svg`<path d="M.5 3.500h2l3-3v10l-3-3h-2z"/><path d="M7.500 3.500c1.300 1 1.300 3 0 4M9.500 2c2 2 2 5 0 7" stroke="#aaa"/>`)}</button>
        <button aria-label="Dropbox">${ic(13, 13, svg`<path d="m3.500 0 3 2-3 2-3-2zM9.500 0l3 2-3 2-3-2zM3.500 4l3 2-3 2-3-2zM9.500 4l3 2-3 2-3-2zM9.500 8l2 1.500-2 1.500-2-1z" fill="#fff" stroke="none"/><path d="M0 5h7v8H0z" fill="#d0021b" stroke="none"/><path d="M2.500 7.500h1v4" stroke="#fff"/>`)}</button>
        <span class="eng">ENG</span>
        <span class="clock">٠٧:٠٢ م<br />٤٣/٠٤/٠٨</span>
        <button class="note" aria-label="الإشعارات">${ic(20, 20, svg`<path d="M7 1h13v10h-7l-2 2v-2H7z" fill="#fff" stroke="none"/><path d="M9 4h9M9 7h9" stroke="#3a2f2e"/><circle cx="6.500" cy="13" r="6" fill="#4a4342" stroke="#999"/><path d="M5.500 10l1.200 1v5" stroke="#fff" stroke-width="1.200"/>`)}</button>
      </div>
      <span class="desk"></span>
    </footer>`;
  }

  render() {
    return html`${this.titleBar()}${this.tabRow()}${this.ribbon()}${this.document()}${this.statusBar()}${this.taskbar()}`;
  }
}
